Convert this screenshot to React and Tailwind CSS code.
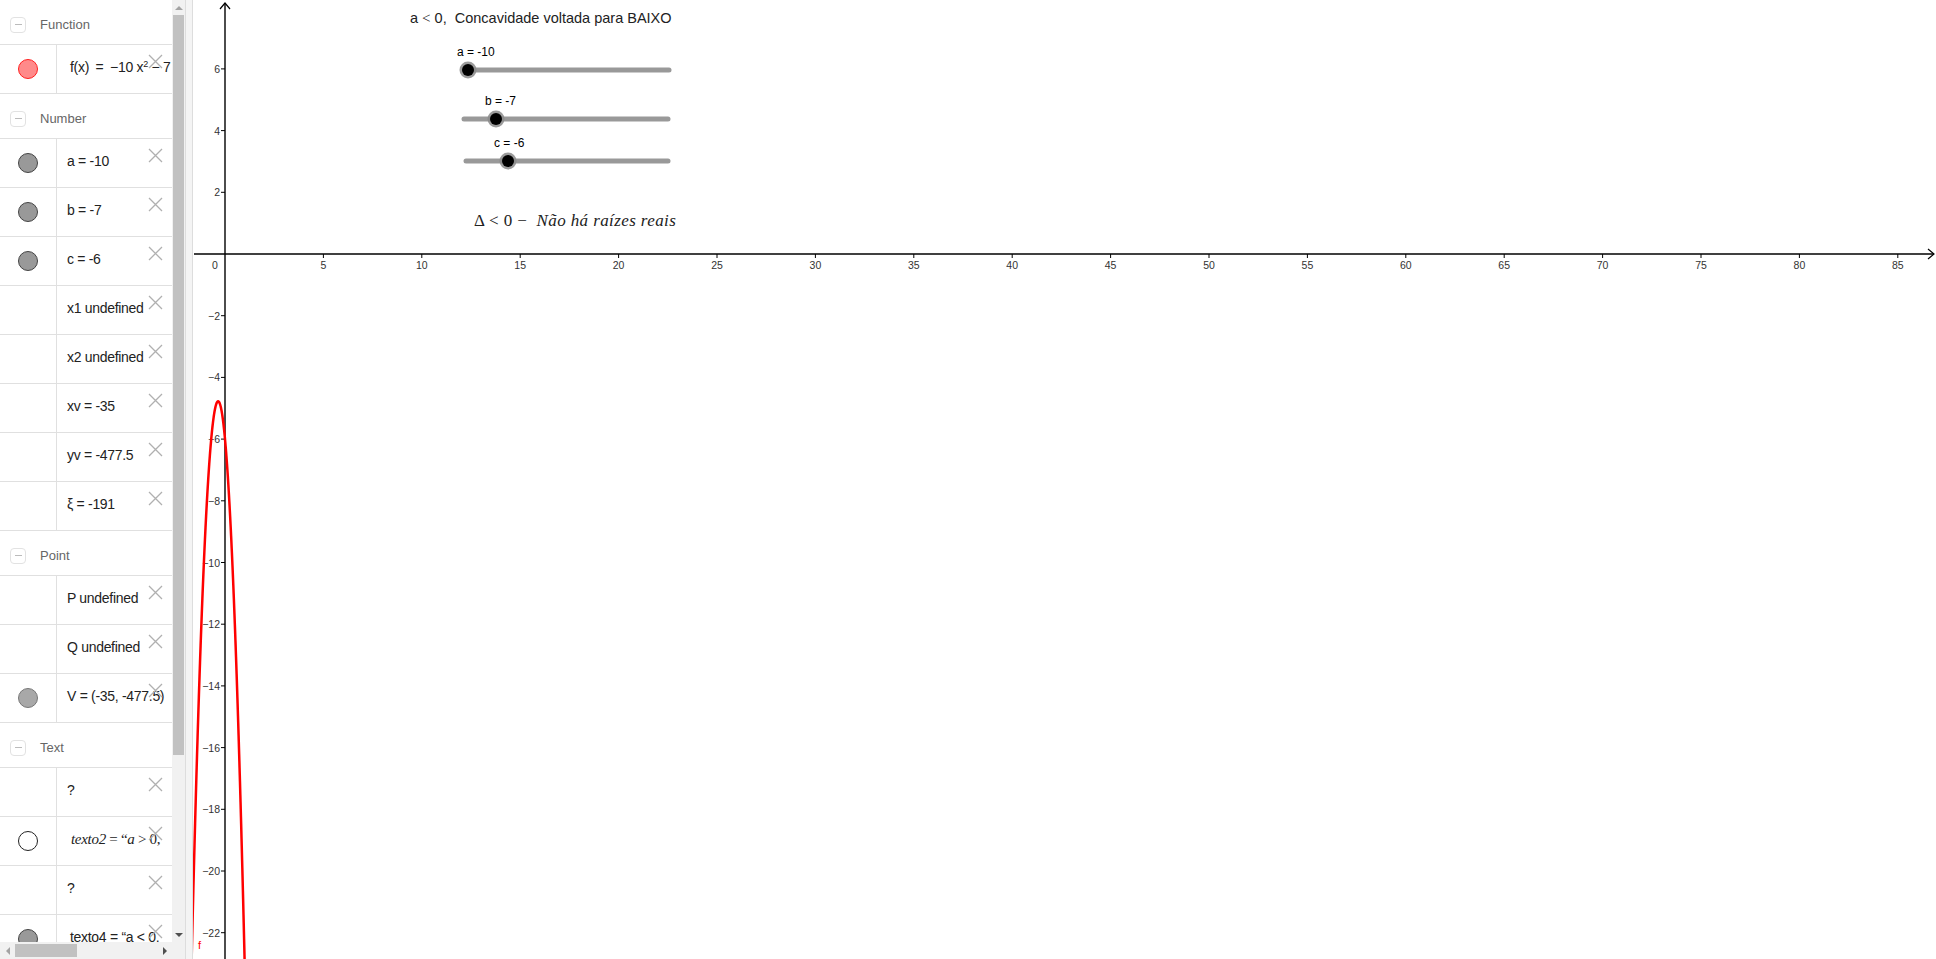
import React from 'react';

// graph geometry in page pixels
const OX = 225;
const OY = 254;
const SX = 19.68;
const SY = 30.85;
const f = (x) => -10 * x * x - 7 * x - 6;

const px = (x) => OX + x * SX;
const py = (y) => OY - y * SY;

const groups = [
  {
    title: 'Function',
    rows: [
      {
        dot: 'red',
        content: (
          <span className="pl-[3px]">
            f(x) <span className="mx-[3px]">=</span> −10 x<sup className="text-[9px]">2</sup> − 7 x − 6
          </span>
        ),
      },
    ],
  },
  {
    title: 'Number',
    rows: [
      { dot: 'gray', content: 'a = -10' },
      { dot: 'gray', content: 'b = -7' },
      { dot: 'gray', content: 'c = -6' },
      { content: 'x1 undefined' },
      { content: 'x2 undefined' },
      { content: 'xv = -35' },
      { content: 'yv = -477.5' },
      { content: 'ξ = -191' },
    ],
  },
  {
    title: 'Point',
    rows: [
      { content: 'P undefined' },
      { content: 'Q undefined' },
      { dot: 'light', content: 'V = (-35, -477.5)' },
    ],
  },
  {
    title: 'Text',
    rows: [
      { content: '?' },
      {
        dot: 'white',
        content: (
          <span className="pl-[4px] font-['Liberation_Serif',serif] text-[15px]">
            <i>texto2</i> = “<i>a</i> &gt; 0,
          </span>
        ),
      },
      { content: '?' },
      { dot: 'gray', content: <span className="pl-[3px]">texto4 = “a &lt; 0,</span> },
    ],
  },
];

const dotClass = {
  red: 'bg-[#ff8a8a] border-[#ff2020]',
  gray: 'bg-[#999999] border-[#444444]',
  light: 'bg-[#a8a8a8] border-[#777777]',
  white: 'bg-white border-[#222222]',
};

function CloseIcon() {
  return (
    <svg className="absolute left-[148px] top-[9px]" width="15" height="15" viewBox="0 0 15 15">
      <path d="M1 1 L14 14 M14 1 L1 14" stroke="#b0b0b0" strokeWidth="1.3" fill="none" />
    </svg>
  );
}

function GroupHeader({ title }) {
  return (
    <div className="flex items-center h-[45px] pt-[5px] border-b border-[#e0e0e0] shrink-0">
      <div className="ml-[10px] w-[16px] h-[16px] rounded-[4px] border border-[#e2e2e2] flex items-center justify-center">
        <div className="w-[7px] h-[1px] bg-[#bbbbbb]" />
      </div>
      <span className="ml-[14px] text-[13px] text-[#666666]">{title}</span>
    </div>
  );
}

function Row({ row }) {
  return (
    <div className="relative flex h-[49px] border-b border-[#e0e0e0] shrink-0">
      <div className="w-[57px] border-r border-[#e0e0e0] flex items-center justify-center shrink-0">
        {row.dot && <div className={`w-[20px] h-[20px] rounded-full border ${dotClass[row.dot]}`} />}
      </div>
      <div className="flex items-center pl-[10px] pb-[4px] whitespace-nowrap text-[14px] text-[#222222] tracking-[-0.3px]">
        {row.content}
      </div>
      <CloseIcon />
    </div>
  );
}

function Sidebar() {
  return (
    <div className="flex h-[959px] shrink-0">
      <div className="flex flex-col w-[185px]">
        <div className="flex flex-1 overflow-hidden">
          <div className="w-[172px] overflow-hidden flex flex-col bg-white">
            {groups.map((g) => (
              <React.Fragment key={g.title}>
                <GroupHeader title={g.title} />
                {g.rows.map((r, i) => (
                  <Row key={i} row={r} />
                ))}
              </React.Fragment>
            ))}
          </div>
          {/* vertical scrollbar */}
          <div className="w-[13px] bg-[#f1f1f1] flex flex-col items-center">
            <div className="h-[15px] flex items-center justify-center">
              <div className="w-0 h-0 border-l-[4px] border-r-[4px] border-b-[4px] border-l-transparent border-r-transparent border-b-[#a3a3a3]" />
            </div>
            <div className="w-[11px] h-[740px] bg-[#c1c1c1]" />
            <div className="flex-1" />
            <div className="h-[15px] flex items-center justify-center">
              <div className="w-0 h-0 border-l-[4px] border-r-[4px] border-t-[4px] border-l-transparent border-r-transparent border-t-[#505050]" />
            </div>
          </div>
        </div>
        {/* horizontal scrollbar */}
        <div className="flex h-[17px] shrink-0">
          <div className="w-[172px] bg-[#f1f1f1] flex items-center">
            <div className="w-[15px] flex justify-center">
              <div className="w-0 h-0 border-t-[4px] border-b-[4px] border-r-[4px] border-t-transparent border-b-transparent border-r-[#a3a3a3]" />
            </div>
            <div className="w-[62px] h-[13px] bg-[#c1c1c1]" />
            <div className="flex-1" />
            <div className="w-[15px] flex justify-center">
              <div className="w-0 h-0 border-t-[4px] border-b-[4px] border-l-[4px] border-t-transparent border-b-transparent border-l-[#505050]" />
            </div>
          </div>
          <div className="w-[13px] bg-[#f1f1f1]" />
        </div>
      </div>
      {/* splitter */}
      <div className="w-[8px] bg-[#f4f4f4] border-l border-r border-[#dddddd]" />
    </div>
  );
}

function Graph() {
  const pts = [];
  for (let x = -1.75; x <= 1.05; x += 0.01) {
    pts.push(`${px(x).toFixed(2)},${py(f(x)).toFixed(2)}`);
  }
  const xTicks = Array.from({ length: 17 }, (_, i) => (i + 1) * 5);
  const yTicks = [6, 4, 2, -2, -4, -6, -8, -10, -12, -14, -16, -18, -20, -22];

  const sliders = [
    { y: 70, x1: 468, x2: 669, knob: 468 },
    { y: 119, x1: 464, x2: 668, knob: 496 },
    { y: 161, x1: 466, x2: 668, knob: 508 },
  ];

  return (
    <div className="relative flex-1 h-[959px] overflow-hidden bg-white font-['Liberation_Sans',Arial,sans-serif]">
      <svg className="absolute left-0 top-0" width="1743" height="959">
        <g transform="translate(-193 0)">
          {/* axes */}
          <line x1="194" y1={OY} x2="1934" y2={OY} stroke="#000" strokeWidth="1.4" />
          <path d={`M1928 ${OY - 5} L1934 ${OY} L1928 ${OY + 5}`} stroke="#000" strokeWidth="1.2" fill="none" />
          <line x1={OX} y1="3" x2={OX} y2="959" stroke="#000" strokeWidth="1.4" />
          <path d={`M${OX - 5} 9 L${OX} 3 L${OX + 5} 9`} stroke="#000" strokeWidth="1.2" fill="none" />

          {xTicks.map((v) => (
            <g key={v}>
              <line x1={px(v)} y1={OY} x2={px(v)} y2={OY + 4} stroke="#000" strokeWidth="1" />
              <text x={px(v)} y={OY + 15} fontSize="10.5" fill="#333" textAnchor="middle" fontFamily="Liberation Sans, Arial, sans-serif">
                {v}
              </text>
            </g>
          ))}
          <text x={OX - 10} y={OY + 15} fontSize="10.5" fill="#333" textAnchor="middle" fontFamily="Liberation Sans, Arial, sans-serif">
            0
          </text>

          {yTicks.map((v) => (
            <g key={v}>
              <line x1={OX - 4} y1={py(v)} x2={OX} y2={py(v)} stroke="#000" strokeWidth="1" />
              <text x={OX - 5} y={py(v) + 4} fontSize="10.5" fill="#333" textAnchor="end" fontFamily="Liberation Sans, Arial, sans-serif">
                {v < 0 ? `−${-v}` : v}
              </text>
            </g>
          ))}

          {/* parabola */}
          <polyline points={pts.join(' ')} stroke="#ff0000" strokeWidth="2.5" fill="none" strokeLinejoin="round" />

          {/* sliders */}
          {sliders.map((s, i) => (
            <g key={i}>
              <line x1={s.x1} y1={s.y} x2={s.x2} y2={s.y} stroke="#999999" strokeWidth="5" strokeLinecap="round" />
              <circle cx={s.knob} cy={s.y} r="8.5" fill="#8a8a8a" opacity="0.85" />
              <circle cx={s.knob} cy={s.y} r="6" fill="#000" />
            </g>
          ))}
        </g>
      </svg>

      {/* texts on the canvas */}
      <div className="absolute left-[217px] top-[7px] text-[14.5px] text-[#222222] whitespace-nowrap">
        a <span className="font-['Liberation_Serif',serif] text-[15px]">&lt;</span> 0,&nbsp; Concavidade voltada para BAIXO
      </div>
      <div className="absolute left-[264px] top-[43px] text-[12px] text-black whitespace-nowrap">a = -10</div>
      <div className="absolute left-[292px] top-[92px] text-[12px] text-black whitespace-nowrap">b = -7</div>
      <div className="absolute left-[301px] top-[134px] text-[12px] text-black whitespace-nowrap">c = -6</div>
      <div className="absolute left-[281px] top-[208px] text-[17px] text-[#222222] whitespace-nowrap font-['Liberation_Serif',serif] tracking-[0.4px]">
        Δ &lt; 0 −&nbsp; <i>Não há raízes reais</i>
      </div>
      <div className="absolute left-[5px] top-[937px] text-[11px] text-[#ff0000]">f</div>
    </div>
  );
}

export default function App() {
  return (
    <div className="flex w-[1936px] h-[959px] overflow-hidden bg-white font-['Liberation_Sans',Arial,sans-serif]">
      <Sidebar />
      <Graph />
    </div>
  );
}
